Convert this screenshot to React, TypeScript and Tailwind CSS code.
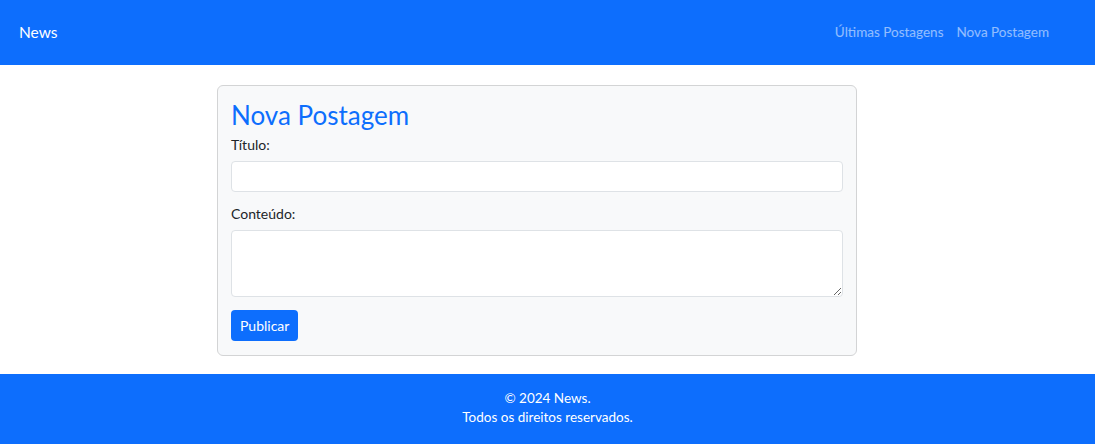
export default function App() {
    const font = {fontFamily: 'Lato, "Open Sans", sans-serif'};

    return (
        <div className="min-h-[444px] flex flex-col bg-white text-[#212529]" style={font}>
            <nav className="h-[65px] bg-[#0d6efd] flex items-center justify-between pl-[19px] pr-[46px]">
                <span className="text-white text-[15.5px]">News</span>
                <div className="flex gap-[13px] text-[13.5px] text-white/55">
                    <a href="#">Últimas Postagens</a>
                    <a href="#">Nova Postagem</a>
                </div>
            </nav>

            <main className="flex justify-center pt-[20px] pb-[18px]">
                <div className="w-[640px] mr-[21px] bg-[#f8f9fa] border border-[#d3d4d5] rounded-[6px] px-[13px] pt-[13px] pb-[14px]">
                    <h3 className="text-[#0d6efd] text-[26px] leading-[33px] mb-[2px]">Nova Postagem</h3>
                    <form className="flex flex-col" onSubmit={(e) => e.preventDefault()}>
                        <label className="text-[14px] leading-[21px] mb-[6px]">Título:</label>
                        <input type="text"
                               className="h-[31px] w-full bg-white border border-[#dee2e6] rounded-[4px] px-2 text-[14px] outline-none"/>
                        <label className="text-[14px] leading-[21px] mt-[11px] mb-[6px]">Conteúdo:</label>
                        <textarea rows={3}
                                  className="h-[67px] w-full bg-white border border-[#dee2e6] rounded-[4px] px-2 py-1 text-[14px] outline-none resize-y"/>
                        <div className="mt-[13px]">
                            <button type="submit"
                                    className="h-[31px] px-[9px] bg-[#0d6efd] text-white text-[14px] rounded-[4px]">
                                Publicar
                            </button>
                        </div>
                    </form>
                </div>
            </main>

            <footer className="h-[70px] pb-[3px] bg-[#0d6efd] text-white text-[13.5px] leading-[19px] flex flex-col items-center justify-center">
                <p>© 2024 News.</p>
                <p>Todos os direitos reservados.</p>
            </footer>
        </div>
    );
}
